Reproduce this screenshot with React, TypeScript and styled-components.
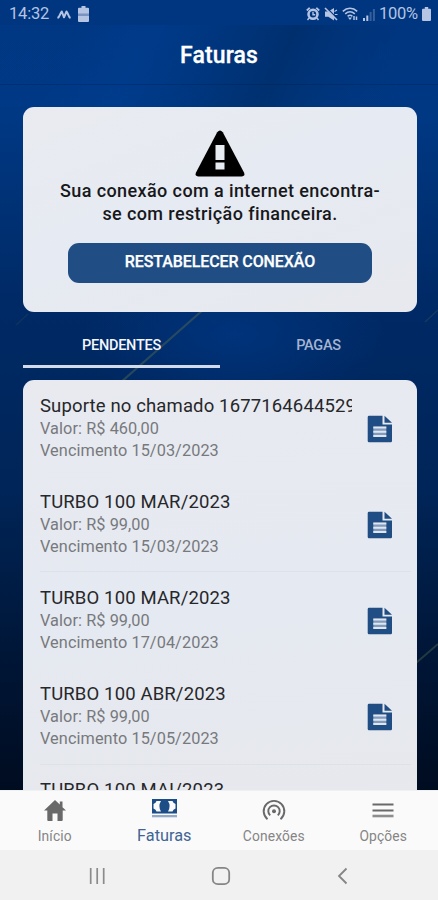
import React from "react";
import styled, { createGlobalStyle } from "styled-components";

const GlobalStyle = createGlobalStyle`
  * { box-sizing: border-box; }
  html, body { margin: 0; padding: 0; overflow: hidden; }
  body { font-family: Roboto, "Liberation Sans", sans-serif; }
`;

const Screen = styled.div`
  position: relative;
  width: 438px;
  height: 900px;
  display: flex;
  flex-direction: column;
  overflow: hidden;
  background: #001433;
`;

const Backdrop = styled.svg`
  position: absolute;
  inset: 0;
  width: 438px;
  height: 790px;
`;

const StatusBar = styled.div`
  position: relative;
  height: 28px;
  padding: 0 7px 0 9px;
  display: flex;
  align-items: center;
  justify-content: space-between;
  color: #b4c4e2;
`;

const StatusGroup = styled.div<{ $gap: number }>`
  display: flex;
  align-items: center;
  gap: ${(p) => p.$gap}px;
  svg { display: block; }
`;

const StatusText = styled.span<{ $spacing: number }>`
  font-size: 16.5px;
  line-height: 28px;
  letter-spacing: ${(p) => p.$spacing}px;
`;

const Header = styled.header`
  position: relative;
  height: 57px;
  display: flex;
  align-items: center;
  justify-content: center;
  border-bottom: 1px solid rgba(0, 25, 70, 0.3);
`;

const Title = styled.h1`
  margin: 0;
  font-size: 23px;
  line-height: 28px;
  font-weight: 500;
  letter-spacing: 0.1px;
  color: #fff;
  -webkit-text-stroke: 0.3px #fff;
`;

const Content = styled.main`
  position: relative;
  flex: 1;
  min-height: 0;
  padding: 22px 21px 0 23px;
  display: flex;
  flex-direction: column;
  overflow: hidden;
`;

const AlertCard = styled.section`
  flex: none;
  height: 205px;
  border-radius: 11px;
  background: linear-gradient(160deg, #e9ebf0 0%, #e6eaf2 45%, #e7e9ee 100%);
  display: flex;
  flex-direction: column;
  align-items: center;
  padding-top: 23px;
  svg { display: block; flex: none; }
`;

const AlertText = styled.p`
  margin: 2px 0 0;
  font-size: 18px;
  line-height: 23px;
  font-weight: 500;
  letter-spacing: 0.4px;
  text-align: center;
  white-space: nowrap;
  color: #17181b;
`;

const ActionButton = styled.button`
  margin-top: 18px;
  width: 304px;
  height: 40px;
  padding: 0 0 2px;
  border: 0;
  border-radius: 11px;
  background: #204e84;
  color: #fff;
  font: 500 16px/20px Roboto, "Liberation Sans", sans-serif;
  letter-spacing: -0.1px;
  -webkit-text-stroke: 0.25px #fff;
`;

const Tabs = styled.div`
  flex: none;
  display: grid;
  grid-template-columns: 197px 197px;
  height: 56px;
`;

const Tab = styled.div<{ $active?: boolean }>`
  height: 56px;
  padding-top: 11px;
  border-bottom: 3px solid ${(p) => (p.$active ? "#d3dbea" : "transparent")};
  text-align: center;
  font-size: 14.5px;
  line-height: 45px;
  font-weight: 500;
  letter-spacing: -0.25px;
  color: ${(p) => (p.$active ? "#f3f6fc" : "#a5b4d1")};
`;

const InvoiceList = styled.section`
  flex: none;
  margin-top: 12px;
  height: 500px;
  border-radius: 11px;
  background: linear-gradient(175deg, #e8eaf0 0%, #e5e9f1 45%, #e7e8eb 100%);
`;

const InvoiceRow = styled.article<{ $rule: boolean }>`
  height: 96.2px;
  margin: 0 6px 0 17px;
  padding-right: 18px;
  display: flex;
  align-items: center;
  justify-content: space-between;
  border-bottom: 1px solid ${(p) => (p.$rule ? "#dee1e7" : "transparent")};
  svg { display: block; position: relative; top: 1px; }
`;

const InvoiceInfo = styled.div`
  width: 312px;
  overflow: hidden;
  white-space: nowrap;
`;

const InvoiceName = styled.div`
  font-size: 18.5px;
  line-height: 24px;
  letter-spacing: 0.14px;
  color: #26272a;
`;

const InvoiceDetail = styled.div`
  font-size: 16.3px;
  line-height: 22px;
  letter-spacing: 0.08px;
  color: #77797d;
`;

const TabBar = styled.nav`
  position: relative;
  height: 60px;
  flex: none;
  display: grid;
  grid-template-columns: repeat(4, 1fr);
  background: #fafafa;
  border-top: 1px solid #f0f1f3;
`;

const NavItem = styled.div<{ $active?: boolean }>`
  display: flex;
  flex-direction: column;
  align-items: center;
  color: ${(p) => (p.$active ? "#1d4d87" : "#696969")};
  svg { display: block; height: 36px; flex: none; }
`;

const NavLabel = styled.span<{ $active?: boolean }>`
  font-size: ${(p) => (p.$active ? 16.3 : 13.8)}px;
  line-height: 18px;
  letter-spacing: ${(p) => (p.$active ? 0 : 0.15)}px;
  color: ${(p) => (p.$active ? "#3f6496" : "#858585")};
`;

const SystemBar = styled.div`
  position: relative;
  height: 50px;
  flex: none;
  display: flex;
  align-items: center;
  justify-content: space-between;
  padding: 2px 86px 0 87px;
  background: #f1f1f1;
`;

const NightBackdrop = () => (
  <Backdrop viewBox="0 0 438 790" preserveAspectRatio="none">
    <defs>
      <linearGradient id="sky" x1="0" y1="0" x2="0" y2="1">
        <stop offset="0" stopColor="#00357f" />
        <stop offset="0.15" stopColor="#003883" />
        <stop offset="0.38" stopColor="#002a66" />
        <stop offset="0.62" stopColor="#002558" />
        <stop offset="0.83" stopColor="#001637" />
        <stop offset="1" stopColor="#000c20" />
      </linearGradient>
      <linearGradient id="shade" gradientUnits="userSpaceOnUse" x1="90" y1="0" x2="390" y2="140">
        <stop offset="0" stopColor="#0045a0" stopOpacity="0.1" />
        <stop offset="0.2" stopColor="#0045a0" stopOpacity="0.3" />
        <stop offset="0.6" stopColor="#002450" stopOpacity="0.38" />
        <stop offset="1" stopColor="#003883" stopOpacity="0" />
      </linearGradient>
      <radialGradient id="glow">
        <stop offset="0" stopColor="#0042a0" stopOpacity="0.4" />
        <stop offset="1" stopColor="#0042a0" stopOpacity="0" />
      </radialGradient>
    </defs>
    <rect width="438" height="790" fill="url(#sky)" />
    <rect y="25" width="438" height="82" fill="url(#shade)" />
    <ellipse cx="235" cy="335" rx="150" ry="80" fill="url(#glow)" />
    <path d="M204 309 L120 383" stroke="#4f6650" strokeWidth="2.2" strokeOpacity="0.5" />
    <path d="M438 310 L425 322" stroke="#4f6650" strokeWidth="1.2" strokeOpacity="0.3" />
    <path d="M28 314 L16 325" stroke="#4f6650" strokeWidth="1.2" strokeOpacity="0.2" />
    <path d="M438 644 L416 663" stroke="#4f6650" strokeWidth="1.800" strokeOpacity="0.45" />
  </Backdrop>
);

const WaveIcon = () => (
  <svg width="14" height="9" viewBox="0 0 14 9" fill="none" stroke="currentColor" strokeWidth="2" strokeLinejoin="round">
    <path d="M.5 8C3 7.200 3 3 4.800 1.500L7 7.300 9.500 1.500C11.200 3 11.200 7.200 13.500 8" />
  </svg>
);

const BatteryLevelIcon = () => (
  <svg width="11" height="16" viewBox="0 0 11 16">
    <path fill="currentColor" d="M3.500 0h4v1.800H10a1 1 0 0 1 1 1V15a1 1 0 0 1-1 1H1a1 1 0 0 1-1-1V2.800a1 1 0 0 1 1-1h2.500z" />
    <path fill="#7a93c0" d="M0 7.500h11v2.500H0z" />
  </svg>
);

const AlarmIcon = () => (
  <svg width="14" height="14" viewBox="0 0 14 14">
    <path fill="currentColor" d="M.2 2.700 3 .3l1.500 1-3.200 3zM13.800 2.700 11 .3l-1.500 1 3.200 3z" />
    <circle cx="7" cy="7.300" r="4.500" fill="none" stroke="currentColor" strokeWidth="2.600" />
    <path d="M7 4.800v3h2.200M3 11l-1.500 2M11 11l1.500 2" fill="none" stroke="currentColor" strokeWidth="1.400" />
  </svg>
);

const MutedIcon = () => (
  <svg width="14" height="14" viewBox="0 0 14 14">
    <path fill="currentColor" d="M1 4.500h3.300L10 1v12.500L4.300 9.800H1z" />
    <path d="m2.500.8 11 11" stroke="#07387e" strokeWidth="1.400" />
    <path d="m1 1 12 12" stroke="currentColor" strokeWidth="1.600" />
    <path d="M10.500 4.500 13 3M10.800 7.500H13.500" stroke="currentColor" strokeWidth="1.200" />
  </svg>
);

const WifiIcon = () => (
  <svg width="17" height="14" viewBox="0 0 17 14" fill="none" stroke="currentColor" strokeWidth="1.600">
    <path d="M.8 4.300c4.300-4 10.100-4 14.400 0M3.200 6.900c3-2.700 6.600-2.700 9.600 0M5.600 9.300c1.500-1.300 3.300-1.300 4.800 0" />
    <path d="m6 10.500 2 2.500 2-2.500z" fill="currentColor" stroke="none" />
    <path d="M12 9v4M14.500 13V9.500" strokeWidth="1.500" />
  </svg>
);

const SignalIcon = () => (
  <svg width="12" height="13" viewBox="0 0 12 13" fill="currentColor">
    <path d="M0 10h2v3H0zM3.300 7.500h2V13h-2z" />
    <path d="M6.600 4h2v9h-2zM9.900 1h2v12h-2z" opacity="0.3" />
  </svg>
);

const BatteryIcon = () => (
  <svg width="9" height="14" viewBox="0 0 9 14">
    <path fill="currentColor" d="M2.800 0h3.400v1.700H8a1 1 0 0 1 1 1V13a1 1 0 0 1-1 1H1a1 1 0 0 1-1-1V2.700a1 1 0 0 1 1-1h1.800z" />
  </svg>
);

const WarningIcon = () => (
  <svg width="50" height="47" viewBox="0 0 50 47">
    <path d="M22.200 2.200Q25-1.200 27.800 2.200L49 42.500Q50.500 46.300 46.500 46.500H3.500Q-.5 46.300 1 42.500z" fill="#000" />
    <path d="M20.500 15h9v15h-9zM20.500 32.500h9v7h-9z" fill="#e7ebf2" />
  </svg>
);

const DocumentIcon = () => (
  <svg width="26" height="28" viewBox="0 0 26 28">
    <path d="M2 .8h13.500v8.800H25V26a1.300 1.300 0 0 1-1.300 1.300H2A1.300 1.300 0 0 1 .7 26V2A1.300 1.300 0 0 1 2 .8z" fill="#204e84" />
    <path d="M17.500.8 25 7.800h-7.500z" fill="#204e84" />
    <path d="M6.300 11.700h13v9.900h-13z" fill="#7f9abd" />
    <path d="M6.300 11.500h13v2h-13zM6.300 15.700h13v2h-13zM6.300 19.900h13v2h-13z" fill="#dfe6f0" />
  </svg>
);

const HomeIcon = () => (
  <svg width="22" height="36" viewBox="0 0 22 36">
    <path fill="currentColor" d="M11 9 0 19.500h3.300V29a1 1 0 0 0 1 1h4.200v-7.500h5V30h4.200a1 1 0 0 0 1-1v-9.500H22l-3.500-3.300V10.500h-2.700v3.100z" />
  </svg>
);

const CashIcon = () => (
  <svg width="25" height="36" viewBox="0 0 25 36">
    <path fill="currentColor" d="M0 8h25v14.500H0z" />
    <path fill="#fafafa" d="M4.500 10H9Q5.800 15 9 20.500H4.500Q4 18.300 1.500 17.500v-4.500Q4 12.200 4.500 10zM20.500 10H16q3.200 5 0 10.500h4.500q.5-2.200 3-3v-4.500q-2.500-.8-3-3z" />
    <path fill="#93aac7" d="M0 24h25v2.300H0z" />
  </svg>
);

const BroadcastIcon = () => (
  <svg width="24" height="36" viewBox="0 0 24 36" fill="none" stroke="currentColor" strokeWidth="1.900">
    <path d="M5.500 28.200A10.300 10.300 0 1 1 18.500 28.200" />
    <path d="M8.200 24.400A5.700 5.700 0 1 1 15.800 24.400" />
    <circle cx="12" cy="20.300" r="2" fill="currentColor" stroke="none" />
  </svg>
);

const MenuIcon = () => (
  <svg width="22" height="36" viewBox="0 0 22 36" stroke="currentColor" strokeWidth="2">
    <path d="M.5 13.500h21M.5 19.500h21" />
    <path d="M.5 25h21" strokeWidth="2.600" opacity="0.75" />
  </svg>
);

const RecentsIcon = () => (
  <svg width="20" height="18" viewBox="0 0 20 18" stroke="#8b8b8b" strokeWidth="1.700">
    <path d="M3.700 1v16M10.200 1v16M16.700 1v16" />
  </svg>
);

const SystemHomeIcon = () => (
  <svg width="20" height="20" viewBox="0 0 20 20" fill="none" stroke="#858585" strokeWidth="1.800">
    <rect x="1.800" y="1.800" width="16.400" height="16.400" rx="5" />
  </svg>
);

const BackIcon = () => (
  <svg width="18" height="18" viewBox="0 0 18 18" fill="none" stroke="#858585" strokeWidth="1.800">
    <path d="M12.500 1.500 5 9l7.500 7.500" />
  </svg>
);

const invoices = [
  { name: "Suporte no chamado 1677164644529", value: "460,00", due: "15/03/2023", rule: false },
  { name: "TURBO 100 MAR/2023", value: "99,00", due: "15/03/2023", rule: true },
  { name: "TURBO 100 MAR/2023", value: "99,00", due: "17/04/2023", rule: false },
  { name: "TURBO 100 ABR/2023", value: "99,00", due: "15/05/2023", rule: true },
  { name: "TURBO 100 MAI/2023", value: "99,00", due: "15/06/2023", rule: false },
];

export default function App() {
  return (
    <>
      <GlobalStyle />
      <Screen>
        <NightBackdrop />
        <StatusBar>
          <StatusGroup $gap={7.500}>
            <StatusText $spacing={-0.2}>14:32</StatusText>
            <WaveIcon />
            <BatteryLevelIcon />
          </StatusGroup>
          <StatusGroup $gap={4}>
            <AlarmIcon />
            <MutedIcon />
            <WifiIcon />
            <SignalIcon />
            <StatusText $spacing={-0.2}>100%</StatusText>
            <BatteryIcon />
          </StatusGroup>
        </StatusBar>
        <Header>
          <Title>Faturas</Title>
        </Header>
        <Content>
          <AlertCard>
            <WarningIcon />
            <AlertText>
              Sua conexão com a internet encontra-
              <br />
              se com restrição financeira.
            </AlertText>
            <ActionButton>RESTABELECER CONEXÃO</ActionButton>
          </AlertCard>
          <Tabs>
            <Tab $active>PENDENTES</Tab>
            <Tab>PAGAS</Tab>
          </Tabs>
          <InvoiceList>
            {invoices.map((invoice, i) => (
              <InvoiceRow key={i} $rule={invoice.rule}>
                <InvoiceInfo>
                  <InvoiceName>{invoice.name}</InvoiceName>
                  <InvoiceDetail>Valor: R$ {invoice.value}</InvoiceDetail>
                  <InvoiceDetail>Vencimento {invoice.due}</InvoiceDetail>
                </InvoiceInfo>
                <DocumentIcon />
              </InvoiceRow>
            ))}
          </InvoiceList>
        </Content>
        <TabBar>
          <NavItem>
            <HomeIcon />
            <NavLabel>Início</NavLabel>
          </NavItem>
          <NavItem $active>
            <CashIcon />
            <NavLabel $active>Faturas</NavLabel>
          </NavItem>
          <NavItem>
            <BroadcastIcon />
            <NavLabel>Conexões</NavLabel>
          </NavItem>
          <NavItem>
            <MenuIcon />
            <NavLabel>Opções</NavLabel>
          </NavItem>
        </TabBar>
        <SystemBar>
          <RecentsIcon />
          <SystemHomeIcon />
          <BackIcon />
        </SystemBar>
      </Screen>
    </>
  );
}
